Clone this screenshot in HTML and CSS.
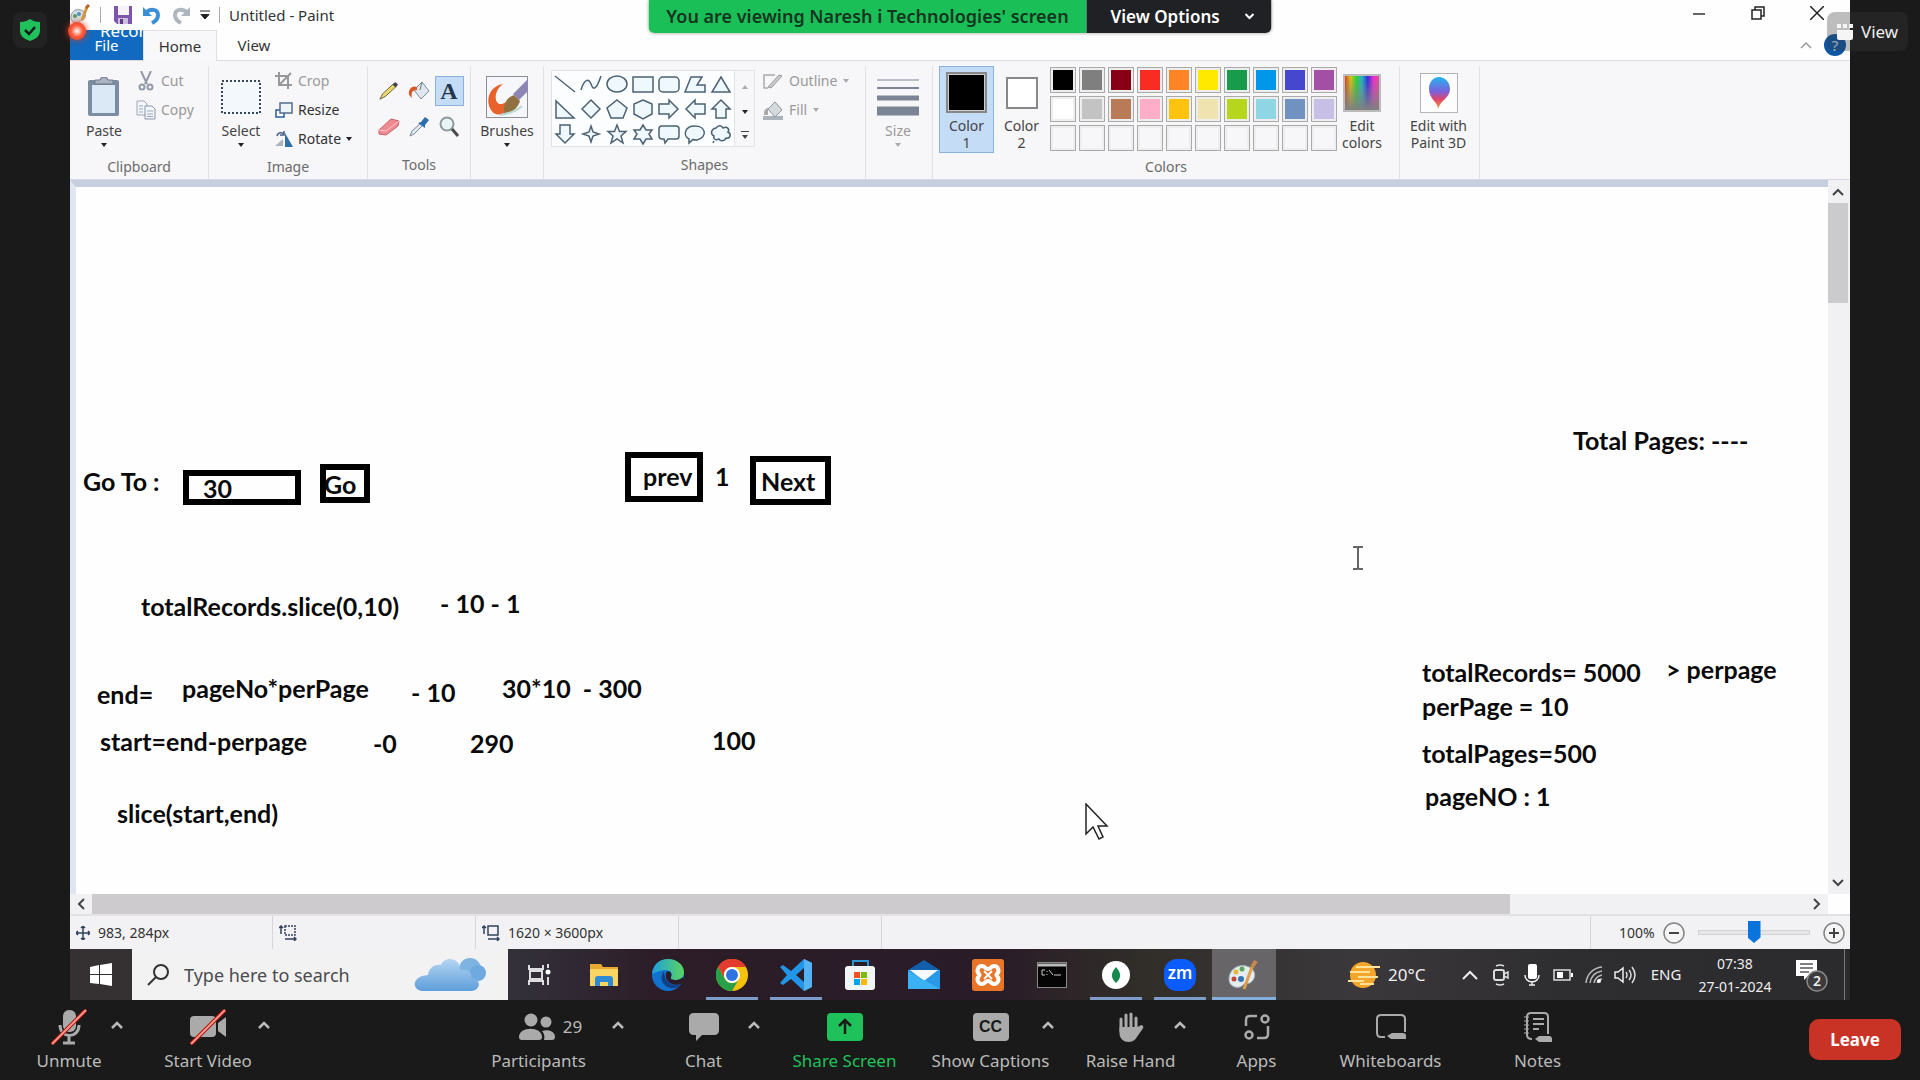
FILE: index.html
```html
<!DOCTYPE html>
<html lang="en">
<head>
<meta charset="utf-8">
<title>Zoom Meeting</title>
<link rel="stylesheet" href="styles.css">
</head>
<body>
<main class="share">
  <header class="titlebar">
    <svg class="app-icon" width="20" height="22" viewBox="0 0 20 22"><path d="M1 12C2 6 8 4 13 7c4 3 3 8-1 9-2 0-2 3-5 3-4 0-7-3-6-7z" fill="#d5dde2" stroke="#8b98a0"/><circle cx="5" cy="12" r="2" fill="#5b9b52"/><circle cx="9" cy="10" r="2" fill="#4b90c8"/><path d="M12 16l5-13" stroke="#d9963f" stroke-width="3"/><path d="M16 4l3-3" stroke="#b5622d" stroke-width="3"/></svg>
    <span class="bar-sep"></span>
    <button class="qa save" aria-label="Save"><svg width="20" height="20" viewBox="0 0 20 20"><path d="M1 1h18v18H4l-3-3z" fill="#7d55ad"/><path d="M5 1h11v9H5z" fill="#f5f3f8"/><path d="M5 13h10v6H5z" fill="#cbbfdc"/><path d="M7 14h3v5H7z" fill="#5d3a8a"/></svg></button>
    <button class="qa" aria-label="Undo"><svg width="20" height="20" viewBox="0 0 20 20"><path d="M1 2v9h9z" fill="#3a8fd8"/><path d="M4 8c4-5 12-4 12 2 0 4-2 6-6 8" fill="none" stroke="#3a8fd8" stroke-width="4"/></svg></button>
    <button class="qa" aria-label="Redo"><svg width="20" height="20" viewBox="0 0 20 20"><path d="M19 2v9h-9z" fill="#b0b6c0"/><path d="M16 8C12 3 4 4 4 10c0 4 2 6 6 8" fill="none" stroke="#b0b6c0" stroke-width="4"/></svg></button>
    <button class="qa more" aria-label="Customize toolbar"><svg width="10" height="10" viewBox="0 0 10 10"><path d="M0 1h10M1 4.500h8L5 9z" stroke="#222" fill="#222"/></svg></button>
    <span class="bar-sep"></span>
    <h1>Untitled - Paint</h1>
    <div class="win-buttons">
      <button aria-label="Minimize"><svg width="14" height="14" viewBox="0 0 14 14"><path d="M1 8h12" stroke="#333" stroke-width="1.500"/></svg></button>
      <button aria-label="Restore"><svg width="14" height="14" viewBox="0 0 14 14"><path d="M1 4h9v9H1zM4 4V1h9v9h-3" fill="none" stroke="#222" stroke-width="1.500"/></svg></button>
      <button aria-label="Close"><svg width="14" height="14" viewBox="0 0 14 14"><path d="M0 0l14 14M14 0L0 14" stroke="#222" stroke-width="1.500"/></svg></button>
    </div>
  </header>

  <nav class="tabs">
    <button class="tab file">File</button>
    <button class="tab active">Home</button>
    <button class="tab">View</button>
    <button class="collapse" aria-label="Collapse ribbon"><svg width="12" height="8" viewBox="0 0 12 8"><path d="M1 7l5-5 5 5" fill="none" stroke="#999" stroke-width="1.500"/></svg></button>
    <button class="help" aria-label="Help">?</button>
  </nav>

  <section class="ribbon">
    <div class="group clipboard">
      <div class="group-body">
        <button class="big"><span class="pic"><svg width="34" height="40" viewBox="0 0 34 40"><rect x="1" y="3" width="31" height="36" rx="2" fill="#7c8ca3"/><rect x="5" y="8" width="23" height="28" fill="#dbe9f7"/><path d="M8 7V3h5a4 3 0 0 1 8 0h5v4z" fill="#aab4c0" stroke="#6f7b8b"/></svg></span>Paste<i class="down"></i></button>
        <div class="stack">
          <button class="row off"><svg width="20" height="20" viewBox="0 0 20 20"><path d="M5 0l6 13M15 0L9 13" stroke="#929aa8" stroke-width="2"/><circle cx="6" cy="16" r="2.500" fill="none" stroke="#929aa8" stroke-width="2"/><circle cx="14" cy="16" r="2.500" fill="none" stroke="#929aa8" stroke-width="2"/></svg>Cut</button>
          <button class="row off"><svg width="20" height="20" viewBox="0 0 20 20"><path d="M1 1h7l3 3v11H1z" fill="#f4f6fa" stroke="#9aa6b8"/><path d="M9 6h7l3 3v10H9z" fill="#f4f6fa" stroke="#8794aa"/><path d="M3 6h4M3 9h4M3 12h4M11 11h6M11 14h6M11 16.500h6" stroke="#9aa6b8"/></svg>Copy</button>
        </div>
      </div>
      <h2>Clipboard</h2>
    </div>
    <div class="group image">
      <div class="group-body">
        <button class="big"><span class="pic"><svg width="40" height="34" viewBox="0 0 40 34"><rect x="1" y="1" width="38" height="32" fill="#f3f8fd" stroke="#33485f" stroke-width="2" stroke-dasharray="2 2"/></svg></span>Select<i class="down"></i></button>
        <div class="stack">
          <button class="row off"><svg width="18" height="18" viewBox="0 0 18 18"><path d="M4 0v13h13M0 4h13v13M4 13L16 1" fill="none" stroke="#989898" stroke-width="2"/></svg>Crop</button>
          <button class="row"><svg width="18" height="18" viewBox="0 0 18 18"><rect x="1" y="9" width="8" height="7" fill="#fff" stroke="#2c5b96" stroke-width="1.500"/><rect x="5" y="2" width="12" height="10" fill="#eef5fb" stroke="#536d8b" stroke-width="1.500"/></svg>Resize</button>
          <button class="row"><svg width="18" height="18" viewBox="0 0 18 18"><path d="M0 16h8V9z" fill="#aab4c0"/><path d="M10 3v14h8z" fill="#2f72a8"/><path d="M2 6c1-4 5-4 7-2M9 1v4H5" fill="none" stroke="#46618a" stroke-width="1.500"/></svg>Rotate<i class="down"></i></button>
        </div>
      </div>
      <h2>Image</h2>
    </div>
    <div class="group tools">
      <div class="group-body tool-grid">
        <button aria-label="Pencil"><svg width="20" height="20" viewBox="0 0 22 22"><path d="M1 20l3-6L16 3l3 3L7 17z" fill="#e8d76a" stroke="#665c3a"/><path d="M15 4l3-3 3 3-3 3z" fill="#45404c"/></svg></button>
        <button aria-label="Fill with color"><svg width="22" height="22" viewBox="0 0 22 22"><path d="M6 10l8-8 7 9-8 8z" fill="#e0e8ee" stroke="#7b8c9a"/><path d="M14 2l-2 8" stroke="#65788a"/><path d="M9 7C4 5 0 9 1 15l3 3c-1-5 0-8 5-8z" fill="#d9592a"/></svg></button>
        <button class="picked" aria-label="Text">A</button>
        <button aria-label="Eraser"><svg width="22" height="20" viewBox="0 0 22 20"><path d="M1 13L13 2l8 2-1 5-12 9-7-1z" fill="#ee8a90" stroke="#c7616a"/><path d="M1 13l7 1L21 4" fill="none" stroke="#fbc9cb"/></svg></button>
        <button aria-label="Color picker"><svg width="22" height="22" viewBox="0 0 22 22"><path d="M2 20l2-5 9-8 2 2-9 9z" fill="#dfeaf2" stroke="#7a8794"/><path d="M10 7l3-1 4-5 4 3-4 5 0 3z" fill="#2d6cad"/></svg></button>
        <button aria-label="Magnifier"><svg width="22" height="22" viewBox="0 0 22 22"><circle cx="9" cy="8" r="6.500" fill="#e9f4f6" stroke="#8f999d" stroke-width="2"/><path d="M14 13l6 7" stroke="#4a4a4a" stroke-width="3"/></svg></button>
      </div>
      <h2>Tools</h2>
    </div>
    <div class="group brushes">
      <div class="group-body">
        <button class="big"><span class="pic"><svg width="42" height="42" viewBox="0 0 42 42"><rect x=".5" y=".5" width="41" height="41" fill="#f6f7fa" stroke="#8c8f98"/><path d="M17 8C3 10-1 25 5 34c5 8 13 4 20-1l-5-7C9 34 5 17 17 8z" fill="#e8622c"/><path d="M42 3v12L33 24l-6-6z" fill="#8d86b4"/><path d="M18 37c-1-10 4-16 10-18l6 6c-2 7-8 12-16 12z" fill="#917141"/><path d="M14 39c6-1 14-2 22-9" stroke="#b7d9d3" fill="none" stroke-width="2"/></svg></span>Brushes<i class="down"></i></button>
      </div>
    </div>
    <div class="group shapes">
      <div class="group-body">
        <div class="gallery">
          <button aria-label="Line"><svg viewBox="0 0 26 26"><path d="M3 5l20 16"/></svg></button>
          <button aria-label="Curve"><svg viewBox="0 0 26 26"><path d="M3 19C6 8 11 7 13 13s5 7 10-8"/></svg></button>
          <button aria-label="Oval"><svg viewBox="0 0 26 26"><ellipse cx="13" cy="13" rx="10" ry="8"/></svg></button>
          <button aria-label="Rectangle"><svg viewBox="0 0 26 26"><rect x="3" y="6" width="20" height="15"/></svg></button>
          <button aria-label="Rounded rectangle"><svg viewBox="0 0 26 26"><rect x="3" y="6" width="20" height="15" rx="4"/></svg></button>
          <button aria-label="Polygon"><svg viewBox="0 0 26 26"><path d="M3 21L9 6h11l-5 8h8v7z"/></svg></button>
          <button aria-label="Triangle"><svg viewBox="0 0 26 26"><path d="M13 6l9 15H4z"/></svg></button>
          <button aria-label="Right triangle"><svg viewBox="0 0 26 26"><path d="M4 5v17h18z"/></svg></button>
          <button aria-label="Diamond"><svg viewBox="0 0 26 26"><path d="M13 4l9 9-9 9-9-9z"/></svg></button>
          <button aria-label="Pentagon"><svg viewBox="0 0 26 26"><path d="M13 4l10 8-4 10H7L3 12z"/></svg></button>
          <button aria-label="Hexagon"><svg viewBox="0 0 26 26"><path d="M13 4l9 4v10l-9 5-9-5V8z"/></svg></button>
          <button aria-label="Right arrow"><svg viewBox="0 0 26 26"><path d="M3 8h10V4l9 9-9 9v-4H3z"/></svg></button>
          <button aria-label="Left arrow"><svg viewBox="0 0 26 26"><path d="M23 8H13V4l-9 9 9 9v-4h10z"/></svg></button>
          <button aria-label="Up arrow"><svg viewBox="0 0 26 26"><path d="M8 22V13H4l9-9 9 9h-4v9z"/></svg></button>
          <button aria-label="Down arrow"><svg viewBox="0 0 26 26"><path d="M8 4v9H4l9 9 9-9h-4V4z"/></svg></button>
          <button aria-label="Four-point star"><svg viewBox="0 0 26 26"><path d="M13 5l2 6 6 2-6 2-2 6-2-6-6-2 6-2z"/></svg></button>
          <button aria-label="Five-point star"><svg viewBox="0 0 26 26"><path d="M13 4l2.500 6.500H22l-5 4.500 2 7-6-4-6 4 2-7-5-4.500h6.500z"/></svg></button>
          <button aria-label="Six-point star"><svg viewBox="0 0 26 26"><path d="M13 4l3 5h6l-3 4 3 5h-6l-3 5-3-5H4l3-5-3-4h6z"/></svg></button>
          <button aria-label="Rounded callout"><svg viewBox="0 0 26 26"><path d="M6 5h14q3 0 3 3v7q0 3-3 3h-8l-3 4-1-4H6q-3 0-3-3V8q0-3 3-3z"/></svg></button>
          <button aria-label="Oval callout"><svg viewBox="0 0 26 26"><path d="M7 18C1 15 2 5 13 5s13 11 2 14c-2 0-3 0-4-.5L7 22z"/></svg></button>
          <button aria-label="Cloud callout"><svg viewBox="0 0 26 26"><path d="M8 7c3-4 6-2 7 0 4-2 7 1 5 4 4 2 2 7-2 6-2 4-6 3-7 1-4 2-6-1-5-3-4-2-3-7 2-8zM6 20l-1 2"/></svg></button>
        </div>
        <div class="gallery-scroll">
          <button aria-label="Scroll up"><i class="up"></i></button>
          <button aria-label="Scroll down"><i class="down"></i></button>
          <button aria-label="All shapes" class="all"><i class="down"></i></button>
        </div>
        <div class="stack">
          <button class="row off"><svg width="20" height="18" viewBox="0 0 20 18"><path d="M12 3H1v13h4" fill="none" stroke="#aaa" stroke-width="1.500"/><path d="M5 15L16 3l3 1L8 16z" fill="#ccc" stroke="#999"/></svg>Outline<i class="down"></i></button>
          <button class="row off"><svg width="20" height="20" viewBox="0 0 20 20"><path d="M0 16h20v4H0z" fill="#aab2bc"/><path d="M5 9l7-7 7 8-7 7z" fill="#d5dade" stroke="#8d969e"/><path d="M5 8c-4 1-4 4-4 7h4z" fill="#aaa"/></svg>Fill<i class="down"></i></button>
        </div>
      </div>
      <h2>Shapes</h2>
    </div>
    <div class="group size">
      <div class="group-body">
        <button class="big off"><span class="pic"><svg width="42" height="38" viewBox="0 0 42 38"><path d="M0 2h42" stroke="#7b8494"/><path d="M0 10h42" stroke="#7b8494" stroke-width="2"/><path d="M0 20h42" stroke="#7b8494" stroke-width="5"/><path d="M0 33h42" stroke="#7b8494" stroke-width="9"/></svg></span>Size<i class="down"></i></button>
      </div>
    </div>
    <div class="group colors">
      <div class="group-body">
        <button class="big color picked"><span class="pic"><b class="chip one"></b></span>Color<br>1</button>
        <button class="big color"><span class="pic"><b class="chip two"></b></span>Color<br>2</button>
        <div class="palette">
          <button aria-label="Black" style="--c:#000"></button><button aria-label="Gray" style="--c:#7f7f7f"></button><button aria-label="Dark red" style="--c:#880015"></button><button aria-label="Red" style="--c:#f92c24"></button><button aria-label="Orange" style="--c:#ff8426"></button><button aria-label="Yellow" style="--c:#ffe900"></button><button aria-label="Green" style="--c:#189b4a"></button><button aria-label="Turquoise" style="--c:#0096ea"></button><button aria-label="Indigo" style="--c:#4646cf"></button><button aria-label="Purple" style="--c:#a34fa4"></button>
          <button aria-label="White" style="--c:#fff"></button><button aria-label="Light gray" style="--c:#c3c3c3"></button><button aria-label="Brown" style="--c:#b97a57"></button><button aria-label="Rose" style="--c:#ffaec9"></button><button aria-label="Gold" style="--c:#ffc20e"></button><button aria-label="Light yellow" style="--c:#efe4b0"></button><button aria-label="Lime" style="--c:#b5d61d"></button><button aria-label="Light turquoise" style="--c:#8fd6e4"></button><button aria-label="Blue-gray" style="--c:#7092be"></button><button aria-label="Lavender" style="--c:#c8bfe7"></button>
          <button aria-label="Custom 1"></button><button aria-label="Custom 2"></button><button aria-label="Custom 3"></button><button aria-label="Custom 4"></button><button aria-label="Custom 5"></button><button aria-label="Custom 6"></button><button aria-label="Custom 7"></button><button aria-label="Custom 8"></button><button aria-label="Custom 9"></button><button aria-label="Custom 10"></button>
        </div>
        <button class="big edit"><span class="pic"><b class="spectrum"></b></span>Edit<br>colors</button>
      </div>
      <h2>Colors</h2>
    </div>
    <div class="group paint3d">
      <div class="group-body">
        <button class="big"><span class="pic"><svg width="38" height="40" viewBox="0 0 38 40"><defs><linearGradient id="drop" x1="0" y1="0" x2="0" y2="1"><stop offset="0" stop-color="#25b4f0"/><stop offset=".45" stop-color="#7a62dd"/><stop offset=".7" stop-color="#e04468"/><stop offset="1" stop-color="#f3a03c"/></linearGradient></defs><rect x=".5" y=".5" width="37" height="39" fill="#fdfdfd" stroke="#b5b5b8"/><path d="M19 4c6 0 11 5 11 12 0 9-9 10-12 20 0-7-9-10-9-20C9 9 13 4 19 4z" fill="url(#drop)"/></svg></span>Edit with<br>Paint 3D</button>
      </div>
    </div>
  </section>

  <section class="workspace">
    <div class="canvas">
      <span class="note goto">Go To :</span>
      <span class="frame f-input"></span><span class="note n-30">30</span>
      <span class="frame f-go"></span><span class="note n-go">Go</span>
      <span class="frame f-prev"></span><span class="note n-prev">prev</span>
      <span class="note n-1">1</span>
      <span class="frame f-next"></span><span class="note n-next">Next</span>
      <span class="note total-pages">Total Pages: ----</span>
      <span class="note slice-call">totalRecords.slice(0,10)</span>
      <span class="note slice-out">- 10 - 1</span>
      <span class="note end">end=</span>
      <span class="note end-calc">pageNo*perPage</span>
      <span class="note end-ten">- 10</span>
      <span class="note end-example">30*10&nbsp; - 300</span>
      <span class="note start-calc">start=end-perpage</span>
      <span class="note start-zero">-0</span>
      <span class="note start-example">290</span>
      <span class="note hundred">100</span>
      <span class="note slice">slice(start,end)</span>
      <span class="note records">totalRecords= 5000</span>
      <span class="note records-cmp">&gt; perpage</span>
      <span class="note per-page">perPage = 10</span>
      <span class="note pages">totalPages=500</span>
      <span class="note page-no">pageNO : 1</span>
      <svg class="ibeam" width="10" height="24" viewBox="0 0 10 24"><path d="M0 1h4l1 1 1-1h4M5 2v20M0 23h4l1-1 1 1h4" fill="none" stroke="#666" stroke-width="2"/></svg>
      <svg class="pointer" width="24" height="38" viewBox="0 0 24 38"><path d="M1 1v30l7-7 6 12 4-2-5-11h9z" fill="#fff" stroke="#222" stroke-width="1.500"/></svg>
    </div>
    <div class="vscroll">
      <button aria-label="Scroll up"><svg width="12" height="8" viewBox="0 0 12 8"><path d="M1 7l5-5 5 5" fill="none" stroke="#444" stroke-width="2"/></svg></button>
      <div class="thumb"></div>
      <button class="last" aria-label="Scroll down"><svg width="12" height="8" viewBox="0 0 12 8"><path d="M1 1l5 5 5-5" fill="none" stroke="#444" stroke-width="2"/></svg></button>
    </div>
    <div class="hscroll">
      <button aria-label="Scroll left"><svg width="8" height="12" viewBox="0 0 8 12"><path d="M7 1L2 6l5 5" fill="none" stroke="#444" stroke-width="2"/></svg></button>
      <div class="track"><div class="thumb"></div></div>
      <button aria-label="Scroll right"><svg width="8" height="12" viewBox="0 0 8 12"><path d="M1 1l5 5-5 5" fill="none" stroke="#444" stroke-width="2"/></svg></button>
    </div>
  </section>

  <footer class="status">
    <div class="cell"><svg width="14" height="14" viewBox="0 0 14 14"><path d="M7 0v14M0 7h14M5 2l2-2 2 2M5 12l2 2 2-2M2 5L0 7l2 2M12 5l2 2-2 2" fill="none" stroke="#33415e" stroke-width="1.500"/></svg>983, 284px</div>
    <div class="cell"><svg width="18" height="16" viewBox="0 0 18 16"><path d="M2 1v8M0 3l2-2 2 2M6 14h11M15 12l2 2-2 2" fill="none" stroke="#33415e" stroke-width="1.500"/><rect x="6" y="1" width="10" height="9" fill="none" stroke="#33415e" stroke-width="1.500" stroke-dasharray="2 1"/></svg></div>
    <div class="cell"><svg width="18" height="16" viewBox="0 0 18 16"><path d="M2 1v8M0 3l2-2 2 2M6 14h11M15 12l2 2-2 2" fill="none" stroke="#33415e" stroke-width="1.500"/><rect x="6" y="1" width="10" height="9" fill="none" stroke="#33415e" stroke-width="1.500"/></svg>1620 × 3600px</div>
    <div class="cell"></div>
    <div class="zoom">
      <label for="zoom">100%</label>
      <button aria-label="Zoom out"><svg width="22" height="22" viewBox="0 0 22 22"><circle cx="11" cy="11" r="10" fill="#f5f5f6" stroke="#858585" stroke-width="1.500"/><path d="M6 11h10" stroke="#444" stroke-width="2"/></svg></button>
      <input id="zoom" type="range" min="0" max="100" value="50">
      <button aria-label="Zoom in"><svg width="22" height="22" viewBox="0 0 22 22"><circle cx="11" cy="11" r="10" fill="#f5f5f6" stroke="#858585" stroke-width="1.500"/><path d="M6 11h10M11 6v10" stroke="#444" stroke-width="2"/></svg></button>
    </div>
  </footer>

  <nav class="taskbar">
    <button class="start" aria-label="Start"><svg width="24" height="24" viewBox="0 0 24 24"><path d="M1 4l9-2v9H1zM11 2l12-2v11H11zM1 12h9v9l-9-1zM11 12h12v11l-12-2z" fill="#fff"/></svg></button>
    <div class="search">
      <svg width="22" height="22" viewBox="0 0 22 22"><circle cx="14" cy="8" r="7" fill="none" stroke="#333" stroke-width="2"/><path d="M9 13l-8 8" stroke="#333" stroke-width="2"/></svg>
      <input type="text" placeholder="Type here to search" aria-label="Search">
      <svg width="74" height="34" viewBox="0 0 74 34"><defs><linearGradient id="cloud" x1="0" y1="0" x2="0" y2="1"><stop offset="0" stop-color="#b5d6f2"/><stop offset="1" stop-color="#5e9edb"/></linearGradient></defs><circle cx="56" cy="11" r="11" fill="#7fb3e2"/><circle cx="64" cy="15" r="8" fill="#6ea9df"/><path d="M10 33c-13 0-13-15 4-16 1-9 9-11 13-10 4-10 20-7 19 5 7-2 13 3 11 8 11 0 10 13 0 13z" fill="url(#cloud)"/></svg>
    </div>
    <button class="task" aria-label="Task View"><svg width="24" height="22" viewBox="0 0 24 22"><path d="M1 1v4h14V1M1 21v-4h14v4M2 7h12v8H2zM20 0v4M20 13v8" fill="none" stroke="#ddd" stroke-width="2"/><circle cx="20" cy="8" r="2.500" fill="#fff"/></svg></button>
    <button class="task" aria-label="File Explorer"><svg width="30" height="26" viewBox="0 0 30 26"><path d="M1 2h11l2 3h15v19H1z" fill="#e9a92f"/><path d="M1 7h28v17H1z" fill="#fbd564"/><path d="M6 24v-7q0-3 3-3h12q3 0 3 3v7h-5v-4h-8v4z" fill="#2f8ad4"/></svg></button>
    <button class="task" aria-label="Edge"><svg width="32" height="32" viewBox="0 0 32 32"><defs><linearGradient id="edge"><stop offset="0" stop-color="#1d9fe0"/><stop offset="1" stop-color="#5bd45e"/></linearGradient></defs><circle cx="16" cy="16" r="16" fill="#1173cf"/><path d="M0 15C1 5 8 0 16 0c9 0 16 6 16 13 0 5-3 8-8 8-4 0-6-1-5-3 2-3 0-7-5-7S4 13 0 15z" fill="url(#edge)"/><path d="M12 12c-5 6-2 15 6 17 5 1 9-1 11-4-8 3-17-1-17-13z" fill="#123f86"/><path d="M19 18c-1 2 1 3 5 3 3 0 5-1 7-3l1 3-3 4c-9 3-17-3-15-11 2-4 7 0 5 4z" fill="#291c28"/></svg></button>
    <button class="task open" aria-label="Chrome"><svg width="32" height="32" viewBox="0 0 32 32"><circle cx="16" cy="16" r="16" fill="#f4c20d"/><path d="M2 8a16 16 0 0 1 28 0H16a8 8 0 0 0-7 12z" fill="#e33b2e"/><path d="M2 8a16 16 0 0 0 14 24l7-12a8 8 0 0 1-14 0z" fill="#27a048"/><circle cx="16" cy="16" r="8" fill="#fff"/><circle cx="16" cy="16" r="6" fill="#2f74e0"/></svg></button>
    <button class="task open" aria-label="Visual Studio Code"><svg width="32" height="32" viewBox="0 0 32 32"><path d="M24 0l8 4v24l-8 4-13-12-8 6-3-2 7-8-7-8 3-2 8 6zM24 9l-8 7 8 7z" fill="#2196e8"/><path d="M24 0l8 4v24l-8 4z" fill="#53b3f3"/></svg></button>
    <button class="task" aria-label="Microsoft Store"><svg width="30" height="32" viewBox="0 0 30 32"><path d="M8 8V2h15v6" fill="none" stroke="#2d96d2" stroke-width="2"/><rect y="7" width="30" height="24" rx="3" fill="#f2f5f7"/><path d="M9 13h6v6H9z" fill="#f25022"/><path d="M16 13h6v6h-6z" fill="#7fba00"/><path d="M9 20h6v6H9z" fill="#00a4ef"/><path d="M16 20h6v6h-6z" fill="#ffb900"/></svg></button>
    <button class="task" aria-label="Mail"><svg width="32" height="30" viewBox="0 0 32 30"><path d="M0 10L16 0l16 10z" fill="#1260ac"/><path d="M0 10h32v19H0z" fill="#2998e6"/><path d="M2 10h28L16 21z" fill="#f7fafd"/><path d="M0 11l32 18H0z" fill="#3ab2f3"/></svg></button>
    <button class="task" aria-label="XAMPP"><svg width="32" height="32" viewBox="0 0 32 32"><rect width="32" height="32" rx="3" fill="#e97628"/><path d="M10 7c3 0 3 3 6 3s3-3 6-3c4 0 6 5 3 8-1 1-1 1 0 2 3 3 1 8-3 8-3 0-3-3-6-3s-3 3-6 3c-4 0-6-5-3-8 1-1 1-1 0-2-3-3-1-8 3-8z" fill="none" stroke="#fff" stroke-width="4"/><path d="M12 12l8 8M20 12l-8 8" stroke="#fff" stroke-width="2"/></svg></button>
    <button class="task" aria-label="Command Prompt"><svg width="30" height="26" viewBox="0 0 30 26"><rect x=".5" y=".5" width="29" height="25" fill="#050505" stroke="#888"/><path d="M1 3h28" stroke="#bbb" stroke-width="3"/><path d="M8 8H5v5h3M10 9v1M10 12v1M12 8l4 5M17 13h7" fill="none" stroke="#ccc"/></svg></button>
    <button class="task open" aria-label="MongoDB Compass"><svg width="28" height="28" viewBox="0 0 28 28"><circle cx="14" cy="14" r="14" fill="#fff"/><path d="M14 6c6 7 5 11 0 16-5-5-6-9 0-16z" fill="#178a50"/></svg></button>
    <button class="task open" aria-label="Zoom"><span class="zm">zm</span></button>
    <button class="task open current" aria-label="Paint"><svg width="32" height="30" viewBox="0 0 32 30"><path d="M1 18C2 8 12 3 21 7c8 4 7 12 1 16-3 1-5-1-7 2-4 5-15 2-14-7z" fill="#e4edf0" stroke="#9fb3bd"/><circle cx="6" cy="19" r="2.500" fill="#c84634"/><circle cx="8" cy="12" r="2.500" fill="#e5b63a"/><circle cx="14" cy="9" r="2.500" fill="#5fa654"/><circle cx="13" cy="19" r="3" fill="#3276b5"/><path d="M16 29L24 7" stroke="#e0a04b" stroke-width="3"/><path d="M24 7l4-6" stroke="#c8894b" stroke-width="4"/></svg></button>
    <div class="tray">
      <button class="weather"><svg width="32" height="28" viewBox="0 0 32 28"><circle cx="15" cy="14" r="13" fill="#f4a62a"/><path d="M8 6h24M2 11h20M10 16h20M0 20h16M12 23h14" stroke="#ffe39a" stroke-width="2"/></svg>20°C</button>
      <button aria-label="Hidden icons"><svg width="16" height="10" viewBox="0 0 16 10"><path d="M1 9l7-7 7 7" fill="none" stroke="#eee" stroke-width="2"/></svg></button>
      <button aria-label="Meet now"><svg width="16" height="22" viewBox="0 0 16 22"><rect x="1" y="6" width="10" height="10" rx="2" fill="none" stroke="#ddd" stroke-width="2"/><path d="M11 10l4-2v6l-4-2M3 2q4-2 8 0M3 20q4 2 8 0" fill="none" stroke="#ddd" stroke-width="1.500"/></svg></button>
      <button aria-label="Microphone"><svg width="16" height="22" viewBox="0 0 16 22"><rect x="4" width="9" height="15" rx="2" fill="#fff"/><path d="M1 11c0 9 14 9 14 0M8 18v3M5 21h6" fill="none" stroke="#eee" stroke-width="1.500"/></svg></button>
      <button aria-label="Battery"><svg width="20" height="12" viewBox="0 0 20 12"><rect x="1" y="1" width="16" height="10" fill="none" stroke="#ddd" stroke-width="1.500"/><path d="M4 3h6v6H4zM18 4h2v4h-2z" fill="#fff"/></svg></button>
      <button aria-label="Wi-Fi"><svg width="17" height="17" viewBox="0 0 17 17"><path d="M1 17C2 8 8 2 17 1M5 17c1-7 5-11 12-12M9 17c1-5 4-7 8-8M12 17c1-2 2-4 5-4" fill="none" stroke="#bbb" stroke-width="1.500"/><circle cx="14" cy="15" r="2" fill="#fff"/></svg></button>
      <button aria-label="Volume"><svg width="22" height="18" viewBox="0 0 22 18"><path d="M1 6h3l5-4v14l-5-4H1z" fill="none" stroke="#eee" stroke-width="1.500"/><path d="M12 6q2 3 0 6M15 4q4 5 0 10M18 1q6 8 0 16" fill="none" stroke="#ddd" stroke-width="1.500"/></svg></button>
      <button class="lang">ENG</button>
      <button class="clock">07:38<br>27-01-2024</button>
      <button class="notice" aria-label="Notifications"><svg width="32" height="34" viewBox="0 0 32 34"><path d="M0 2h21v16h-9l-4 4v-4H0z" fill="#fff"/><path d="M4 6h13M4 10h13M4 14h9" stroke="#555" stroke-width="1.500"/><circle cx="21" cy="23" r="10" fill="#3c3a3d" stroke="#888" stroke-width="1.500"/></svg><span>2</span></button>
    </div>
  </nav>
</main>

<div class="recording"><i></i>Recor</div>

<button class="shield" aria-label="Meeting information"><svg width="20" height="22" viewBox="0 0 20 22"><path d="M10 0q4 3 10 3v9q0 7-10 10Q0 19 0 12V3q6 0 10-3z" fill="#1fc15b"/><path d="M5 11l4 4 6-7" fill="none" stroke="#1a1a1a" stroke-width="2.500"/></svg></button>

<div class="banner">
  <span class="viewing">You are viewing Naresh i Technologies' screen</span>
  <button class="options">View Options<svg width="10" height="7" viewBox="0 0 10 7"><path d="M1 1l4 4 4-4" fill="none" stroke="#fff" stroke-width="2"/></svg></button>
</div>

<button class="view"><svg width="16" height="16" viewBox="0 0 16 16"><path d="M0 0h4v4H0zM6 0h4v4H6zM12 0h4v4h-4zM0 6h16v8q0 2-2 2H2q-2 0-2-2z" fill="#f5f5f5"/></svg>View</button>

<footer class="meeting">
  <div class="controls left">
    <div class="control mute"><button class="main"><span><svg width="36" height="36" viewBox="0 0 36 36"><rect x="12" y="1" width="13" height="22" rx="6" fill="#aaa"/><path d="M9 16c0 14 19 14 19 0M18 27v6M12 34h12" fill="none" stroke="#aaa" stroke-width="3"/><path d="M1 35L35 1" stroke="#a11" stroke-width="4"/><path d="M1 35L35 1" stroke="#f98" stroke-width="2"/></svg></span>Unmute</button><button class="caret" aria-label="Audio options"><svg width="12" height="8" viewBox="0 0 12 8"><path d="M1 7l5-5 5 5"/></svg></button></div>
    <div class="control video"><button class="main"><span><svg width="38" height="36" viewBox="0 0 38 36"><rect x="1" y="7" width="26" height="21" rx="4" fill="#aaa"/><path d="M29 14l8-6v20l-8-6z" fill="#aaa"/><path d="M2 35L36 1" stroke="#a11" stroke-width="4"/><path d="M2 35L36 1" stroke="#f98" stroke-width="2"/></svg></span>Start Video</button><button class="caret" aria-label="Video options"><svg width="12" height="8" viewBox="0 0 12 8"><path d="M1 7l5-5 5 5"/></svg></button></div>
  </div>
  <div class="controls center">
    <div class="control people"><button class="main"><span><svg width="36" height="28" viewBox="0 0 36 28"><circle cx="12" cy="7" r="6.500" fill="#aaa"/><circle cx="27" cy="9" r="5.500" fill="#aaa"/><path d="M0 24c0-11 23-11 23 0q0 3-3 3H3q-3 0-3-3zM25 27c1-4 0-7-2-9 6-2 13 0 13 6q0 3-3 3z" fill="#aaa"/></svg><b>29</b></span>Participants</button><button class="caret" aria-label="Participant options"><svg width="12" height="8" viewBox="0 0 12 8"><path d="M1 7l5-5 5 5"/></svg></button></div>
    <div class="control chat"><button class="main"><span><svg width="30" height="28" viewBox="0 0 30 28"><path d="M5 0h20q5 0 5 5v12q0 5-5 5H13l-6 6v-6H5q-5 0-5-5V5q0-5 5-5z" fill="#aaa"/></svg></span>Chat</button><button class="caret" aria-label="Chat options"><svg width="12" height="8" viewBox="0 0 12 8"><path d="M1 7l5-5 5 5"/></svg></button></div>
    <div class="control share-btn"><button class="main"><span><svg width="36" height="28" viewBox="0 0 36 28"><rect width="36" height="28" rx="4" fill="#1fc15b"/><path d="M18 21V8M12 13l6-6 6 6" fill="none" stroke="#1a1a1a" stroke-width="2.500"/></svg></span>Share Screen</button></div>
    <div class="control captions"><button class="main"><span><b class="cc">CC</b></span>Show Captions</button><button class="caret" aria-label="Caption options"><svg width="12" height="8" viewBox="0 0 12 8"><path d="M1 7l5-5 5 5"/></svg></button></div>
    <div class="control hand"><button class="main"><span><svg width="26" height="30" viewBox="0 0 26 30"><path d="M3 7v12M8 3v14M13 2v14M18 6v12" stroke="#aaa" stroke-width="3" stroke-linecap="round"/><path d="M1.500 15h18l4-2q3 1 1 4l-7 10c-4 5-16 4-16-6z" fill="#aaa"/></svg></span>Raise Hand</button><button class="caret" aria-label="Reaction options"><svg width="12" height="8" viewBox="0 0 12 8"><path d="M1 7l5-5 5 5"/></svg></button></div>
    <div class="control"><button class="main"><span><svg width="26" height="26" viewBox="0 0 26 26"><path d="M2 12V6q0-4 4-4h7M24 12v8q0 4-4 4h-7" fill="none" stroke="#aaa" stroke-width="2.500"/><circle cx="21" cy="5" r="3.500" fill="none" stroke="#aaa" stroke-width="2.500"/><circle cx="5" cy="21" r="3.500" fill="none" stroke="#aaa" stroke-width="2.500"/></svg></span>Apps</button></div>
    <div class="control"><button class="main"><span><svg width="30" height="26" viewBox="0 0 30 26"><path d="M9 23H5q-4 0-4-4V5q0-4 4-4h20q4 0 4 4v13" fill="none" stroke="#aaa" stroke-width="2"/><path d="M11 22l5-3h11q3 0 3 3v3H15z" fill="#aaa"/></svg></span>Whiteboards</button></div>
    <div class="control"><button class="main"><span><svg width="28" height="30" viewBox="0 0 28 30"><path d="M8 27q-5 0-5-4V5q0-4 4-4h13q4 0 4 4v17M9 7h11M9 12h11M9 17h6" fill="none" stroke="#aaa" stroke-width="2"/><path d="M0 5h5M0 9h5M0 13h5M0 17h5M0 21h5" stroke="#aaa"/><path d="M11 27l4-3h10q3 0 3 3v3H15z" fill="#aaa"/></svg></span>Notes</button></div>
  </div>
  <button class="leave">Leave</button>
</footer>
</body>
</html>
```
FILE: styles.css
```css
* { box-sizing: border-box; }
body {
  margin: 0;
  min-height: 100vh;
  display: flex;
  flex-direction: column;
  position: relative;
  background: #1a1a1a;
  color: #333;
  font: 14px/17px "Noto Sans", "Open Sans", sans-serif;
}
button, input { font: inherit; color: inherit; }
button { border: 0; padding: 0; margin: 0; background: none; }
svg { display: block; flex: none; }
h1, h2 { margin: 0; font-weight: 400; }

.share {
  flex: 1;
  margin: 0 70px;
  display: flex;
  flex-direction: column;
  background: #fefefe;
}

/* Title bar */
.titlebar { height: 30px; display: flex; align-items: center; }
.app-icon { margin-right: 10px; }
.bar-sep { width: 1px; height: 16px; background: #aaa; }
.qa { width: 20px; margin-left: 9px; }
.qa.save { margin-left: 12px; }
.qa.more { display: flex; justify-content: center; margin: 0 4px; }
.titlebar h1 { margin-left: 9px; font-size: 15px; line-height: 20px; }
.win-buttons { display: flex; margin: 0 4px 4px auto; }
.win-buttons button { width: 59px; height: 26px; display: flex; align-items: center; justify-content: center; }

/* Ribbon tabs */
.tabs { height: 31px; display: flex; align-items: center; border-bottom: 1px solid #dcdadd; font-size: 15px; }
.tab { align-self: stretch; width: 74px; }
.tab.file { width: 73px; background: #1269c0; color: #fff; }
.tab.active { border: 1px solid #e2e0e3; border-bottom: 0; background: #f8f7fa; margin-bottom: -1px; }
.collapse { margin-left: auto; padding: 4px; }
.help { width: 22px; height: 22px; margin: 0 4px 0 8px; border-radius: 50%; background: #0d56a6; color: #cfe0f2; }

/* Ribbon */
.ribbon { display: flex; height: 119px; padding-top: 5px; background: #f7f6f9; border-bottom: 1px solid #d5d8e2; }
.group { display: flex; flex-direction: column; border-right: 1px solid #e3e1e6; flex: none; }
.group-body { display: flex; height: 88px; }
.group h2 { color: #6b6b6b; font-size: 14px; line-height: 28px; text-align: center; }
.clipboard { width: 139px; }
.clipboard .big { width: 52px; margin-left: 8px; }
.clipboard .stack { margin-left: 6px; }
.image { width: 159px; }
.image .big { width: 56px; margin-left: 4px; }
.image .stack { margin-left: 6px; }
.tools { width: 103px; }
.brushes { width: 73px; }
.brushes .big { width: 72px; }
.shapes { width: 322px; }
.size { width: 67px; }
.size .big { width: 64px; }
.colors { width: 467px; }
.paint3d { width: 80px; }
.paint3d .big { width: 77px; }

.big { height: 87px; color: #444; display: block; text-align: center; }
.big .pic { height: 49px; display: flex; align-items: center; justify-content: center; }
.big .down { display: block; margin: 4px auto 0; }
.down, .up { display: inline-block; width: 0; height: 0; border: 3px solid transparent; border-top: 4px solid #222; border-bottom: 0; }
.up { border-top: 0; border-bottom: 4px solid #aaa; }
.off { color: #999; }
.big.off { color: #999; }
.off .down { border-top-color: #aaa; }
.row { display: flex; align-items: center; gap: 5px; height: 29px; }

.group-body.tool-grid { display: grid; grid-template-columns: repeat(3, 30px); grid-template-rows: 36px 36px; padding: 7px 0 0 6px; place-items: center; place-content: start; }
.tool-grid button { width: 29px; height: 30px; display: flex; align-items: center; justify-content: center; }
.picked { background: #c4dcf6; outline: 1px solid #8ab0dc; outline-offset: -1px; }
.tool-grid .picked { font: bold 24px/28px "Liberation Serif", serif; color: #26364a; }

.gallery { display: grid; grid-template-columns: repeat(7, 26px); grid-template-rows: repeat(3, 25px); height: 77px; margin: 4px 0 0 7px; padding: 0; background: #fbfdff; border: 1px solid #dfe3e8; }
.gallery svg { width: 26px; height: 26px; fill: #eff8fc; stroke: #4c6272; stroke-width: 1.500; }
.gallery-scroll { display: grid; grid-template-rows: repeat(3, 25px); width: 20px; height: 77px; margin-top: 4px; border: 1px solid #e3e3e6; border-left: 0; }
.gallery-scroll .all i { border-top-color: #444; position: relative; }
.gallery-scroll .all i::before { content: ""; position: absolute; left: -4px; top: -8px; width: 8px; height: 1px; background: #444; }
.shapes .stack { margin-left: 8px; }
.shapes .row { gap: 6px; }

.color { width: 55px; margin-left: 6px; }
.color + .color { margin-left: 0; }
.chip { display: block; border: 2px solid #888; }
.chip.one { width: 41px; height: 41px; background: #000; box-shadow: inset 0 0 0 1px #ccc; }
.chip.two { width: 32px; height: 32px; background: #fff; }
.palette { display: grid; grid-template-columns: repeat(10, 26px); grid-auto-rows: 26px; gap: 3px; padding: 1px 0 0 1px; }
.palette button { background: var(--c, #f7f6f9); border: 1px solid #aaa; box-shadow: inset 0 0 0 2px #eee; }
.edit { width: 48px; margin-left: 1px; }
.spectrum { display: block; width: 38px; height: 38px; border: 2px solid #bbb; background: linear-gradient(#8080, #808080), linear-gradient(90deg, #e73a1b, #d8c616, #32d332, #20b6c8, #2b28e0, #f02ad2, #e44a9c); }

/* Drawing area */
.workspace { flex: 1; display: grid; grid-template-columns: 1fr 22px; grid-template-rows: 1fr 20px; }
.canvas { position: relative; border-left: 6px solid #dfe6f2; border-top: 7px solid #c6cfe0; background: #fefefe; overflow: hidden; }
.note { position: absolute; font: bold 25px/32px Lato, sans-serif; font-variant-ligatures: none; color: #0a0a0a; white-space: pre; }
.frame { position: absolute; border: 6px solid #000; }
.goto { left: 7px; top: 278px; }
.f-input { left: 107px; top: 283px; width: 118px; height: 35px; }
.n-30 { left: 127px; top: 285px; }
.f-go { left: 244px; top: 277px; width: 50px; height: 39px; }
.n-go { left: 248px; top: 281px; }
.f-prev { left: 549px; top: 265px; width: 78px; height: 50px; }
.n-prev { left: 567px; top: 273px; }
.n-1 { left: 639px; top: 273px; }
.f-next { left: 674px; top: 269px; width: 81px; height: 49px; }
.n-next { left: 685px; top: 278px; }
.total-pages { left: 1497px; top: 237px; }
.slice-call { left: 65px; top: 403px; }
.slice-out { left: 364px; top: 400px; }
.end { left: 21px; top: 491px; }
.end-calc { left: 106px; top: 485px; }
.end-ten { left: 335px; top: 489px; }
.end-example { left: 426px; top: 485px; }
.start-calc { left: 24px; top: 538px; }
.start-zero { left: 297px; top: 540px; }
.start-example { left: 394px; top: 540px; }
.hundred { left: 636px; top: 537px; }
.slice { left: 41px; top: 610px; }
.records { left: 1346px; top: 469px; }
.records-cmp { left: 1590px; top: 466px; }
.per-page { left: 1346px; top: 503px; }
.pages { left: 1346px; top: 550px; }
.page-no { left: 1349px; top: 593px; }
.ibeam { position: absolute; left: 1277px; top: 359px; }
.pointer { position: absolute; left: 1009px; top: 616px; }

.vscroll { display: flex; flex-direction: column; background: #f1f0f2; padding-right: 2px; }
.vscroll button { height: 23px; display: flex; align-items: center; justify-content: center; }
.vscroll .thumb { height: 100px; background: #cbcacc; }
.vscroll .last { margin-top: auto; }
.hscroll { display: flex; background: #f1f0f3; }
.hscroll button { width: 22px; display: flex; align-items: center; justify-content: center; }
.hscroll .track { flex: 1; display: flex; padding-right: 6px; }
.hscroll .thumb { width: 83%; background: #cdcbce; }

/* Status bar */
.status { height: 35px; display: flex; background: #f2f1f4; border-top: 2px solid #e3e1e5; color: #333; }
.cell { width: 203px; display: flex; align-items: center; gap: 8px; padding-left: 6px; border-right: 1px solid #d6d5d8; }
.zoom { margin-left: auto; display: flex; align-items: center; padding: 0 5px 0 28px; border-left: 1px solid #d6d5d8; }
.zoom label { width: 44px; }
.zoom button { width: 22px; }
.zoom input { appearance: none; width: 112px; height: 24px; margin: 0 13px; background: none; }
.zoom input::-webkit-slider-runnable-track { height: 5px; background: #e6e5e8; border: 1px solid #d2d1d4; }
.zoom input::-webkit-slider-thumb { appearance: none; width: 13px; height: 22px; margin-top: -10px; background: #0a74dd; clip-path: polygon(0 0, 100% 0, 100% 75%, 50% 100%, 0 75%); }

/* Windows taskbar */
.taskbar { height: 51px; display: flex; background: linear-gradient(90deg, #353132, #33303a 25%, #2c1d28 33%, #291c28 52%, #312d28 60%, #3b383c 72%, #2e2d30 84%, #2b2a2d); color: #eee; }
.start { width: 62px; padding-left: 19px; }
.search { width: 376px; display: flex; align-items: center; padding: 0 20px 0 15px; background: #f3f2f3; }
.search input { flex: 1; min-width: 0; border: 0; padding: 0; margin-left: 15px; background: none; font-size: 18px; }
.search input::placeholder { color: #4a4a4d; opacity: 1; }
.task { width: 64px; display: flex; align-items: center; justify-content: center; position: relative; }
.task.open { background: linear-gradient(#7d9cc9, #7d9cc9) center bottom / 52px 3px no-repeat; }
.task.current { background: linear-gradient(#82aede, #82aede) bottom / 100% 3px no-repeat #676567; }
.zm { width: 32px; height: 32px; border-radius: 13px; background: #0b5cff; color: #fff; font-size: 17px; line-height: 28px; font-weight: 600; }
.tray { flex: 1; display: flex; align-items: center; padding-right: 5px; border-right: 1px solid #777; margin-right: 5px; }
.tray button { display: flex; flex: none; align-items: center; justify-content: center; width: 31px; }
.tray .weather { width: 82px; margin: 0 24px 0 72px; gap: 8px; justify-content: start; font-size: 17px; }
.tray .lang { width: 46px; font-size: 15px; margin-left: 3px; }
.tray .clock { display: block; width: 84px; margin-left: 4px; font-size: 14px; line-height: 23px; }
.tray .notice { position: relative; margin-left: 19px; width: 32px; }
.notice span { position: absolute; right: 7px; bottom: 3px; font-size: 14px; font-weight: 600; }

/* Meeting overlays on the shared screen */
.recording { position: absolute; left: 68px; top: 22px; display: flex; align-items: center; gap: 14px; color: #fff; font-size: 17px; line-height: 14px; }
.recording i { width: 18px; height: 18px; border-radius: 50%; background: radial-gradient(#fff, #ff5b3c 45%, #d8331b); box-shadow: 0 0 6px #e03a1c; }
.shield { position: absolute; left: 13px; top: 12px; width: 34px; height: 36px; border-radius: 8px; background: #222; display: flex; align-items: center; justify-content: center; }
.banner { position: absolute; top: 0; left: 50%; transform: translateX(-50%); display: flex; height: 33px; border-radius: 0 0 6px 6px; overflow: hidden; font-size: 17px; font-weight: 600; white-space: nowrap; box-shadow: 0 1px 3px #8888; }
.viewing { width: 438px; font-size: 18px; line-height: 32px; text-align: center; background: #1abf57; color: #16351f; }
.options { width: 185px; display: flex; align-items: center; justify-content: space-between; padding: 0 17px 0 24px; background: #202124; color: #fff; }
.view { position: absolute; right: 12px; top: 12px; width: 81px; height: 39px; display: flex; align-items: center; gap: 8px; padding-left: 10px; border-radius: 8px; background: rgba(57, 57, 57, .33); color: #eee; font-size: 17px; }

/* Meeting toolbar */
.meeting { height: 80px; display: flex; align-items: flex-start; justify-content: space-between; padding: 5px 19px 0 30px; color: #bbb; }
.controls { display: flex; }
.controls.center { display: grid; grid-template-columns: 195px 108px 137px 155px 152px 102px 175px 50px; margin-right: 31px; }
.control { display: flex; align-items: flex-start; }
.main { width: 106px; font-size: 17px; line-height: 24px; white-space: nowrap; }
.main span { height: 44px; display: flex; align-items: center; justify-content: center; }
.control:nth-child(n+6) .main { width: 42px; display: flex; flex-direction: column; align-items: center; }
.control:nth-child(7) .main { width: 106px; }
.control:nth-child(8) .main { width: 50px; }
.caret { width: 18px; height: 40px; display: flex; align-items: center; justify-content: center; }
.caret svg { fill: none; stroke: #bbb; stroke-width: 2.500; }
.mute .main { width: 78px; }
.video { margin-left: 31px; }
.video .main { width: 102px; margin-right: -4px; }
.people .main { width: 100px; margin-right: 20px; }
.people .main span { gap: 8px; padding-left: 24px; }
.people b { font-weight: 400; }
.chat .main { width: 40px; margin-right: 21px; }
.share-btn .main { color: #1fc15b; }
.captions .main { width: 124px; margin-right: -14px; }
.hand .main { width: 94px; margin-right: -7px; }
.cc { width: 36px; height: 28px; border-radius: 4px; background: #aaa; color: #1a1a1a; font: bold 16px/28px "Liberation Sans", sans-serif; }
.leave { width: 92px; height: 41px; margin-top: 14px; border-radius: 10px; background: #c93325; color: #fff; font-size: 17px; font-weight: 700; }
```
